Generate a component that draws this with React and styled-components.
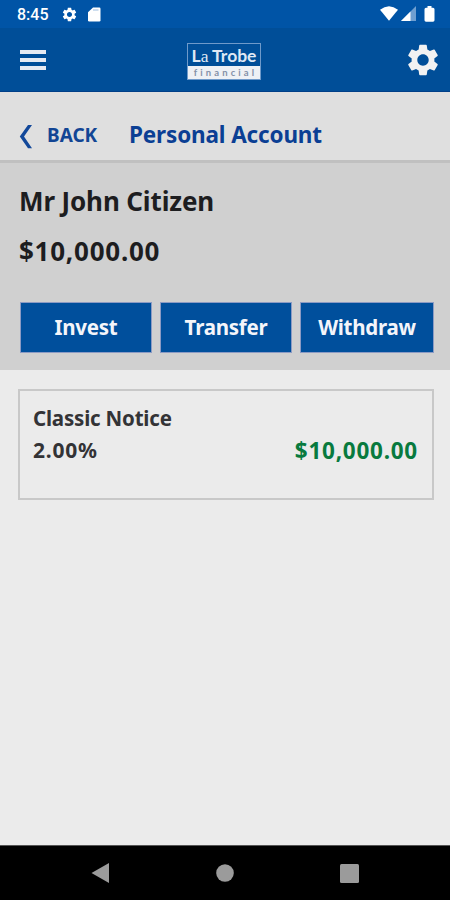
import styled, { createGlobalStyle } from 'styled-components';
import { MdSettings } from 'react-icons/md';

const GlobalStyles = createGlobalStyle`
    *, *::before, *::after {
        box-sizing: border-box;
    }
    body {
        margin: 0;
        background-color: #ebebeb;
        font-family: 'Noto Sans', 'Open Sans', sans-serif;
    }
`;

const ScreenStyles = styled.div`
    display: flex;
    flex-direction: column;
    width: 450px;
    height: 900px;
    overflow: hidden;
    background-color: #ebebeb;
    svg {
        display: block;
        flex-shrink: 0;
    }
`;

const Label = styled.span`
    font-size: ${({ $size }) => $size}px;
    letter-spacing: ${({ $spacing }) => $spacing || 0}px;
    font-weight: 700;
    color: ${({ $color }) => $color || '#1d1d1f'};
    line-height: 32px;
    white-space: nowrap;
`;

const StatusBarStyles = styled.div`
    display: flex;
    align-items: center;
    height: 28px;
    padding: 0 15px 0 17px;
    background-color: #0054a6;
    color: #fff;
    .time {
        width: 44px;
        padding-top: 2px;
        font-family: Roboto, sans-serif;
        font-size: 16px;
        font-weight: 500;
        line-height: 28px;
    }
    .card {
        margin-left: 10px;
    }
    .signals {
        display: flex;
        gap: 3px;
        margin-left: auto;
    }
`;

const HeaderStyles = styled.header`
    display: flex;
    align-items: center;
    justify-content: space-between;
    height: 64px;
    padding: 0 8px 0 20px;
    background-color: #004e98;
    border-bottom: 1px solid #003f88;
    color: #f2f2f2;
`;

const MenuIcon = styled.div`
    display: flex;
    flex-direction: column;
    gap: 4px;
    width: 26px;
    span {
        height: 4px;
        background-color: #e6eaf2;
    }
`;

const LogoStyles = styled.div`
    width: 74px;
    height: 37px;
    margin: 3px 0 0 -2px;
    border: 1px solid #6f9aca;
    text-align: center;
    .name {
        height: 22px;
        color: #dfe8f4;
        font-family: Lato, sans-serif;
        font-size: 17.5px;
        font-weight: 700;
        line-height: 24px;
        white-space: nowrap;
    }
    .thin {
        font-family: 'Liberation Serif', serif;
        font-weight: 400;
    }
    .tagline {
        height: 13px;
        padding-left: 3px;
        background-color: #eef1f5;
        color: #8492a8;
        font-family: Lato, sans-serif;
        font-size: 9.5px;
        font-weight: 700;
        letter-spacing: 3.1px;
        line-height: 13px;
        white-space: nowrap;
    }
`;

const TitleBarStyles = styled.div`
    display: flex;
    height: 71px;
    padding: 27px 0 0 19px;
    background-color: #dfdfdf;
    border-bottom: 3px solid #c0c0c0;
    .chevron {
        margin-top: 6px;
    }
    .back {
        width: 82px;
        margin-left: 14px;
    }
`;

const SummaryStyles = styled.section`
    display: flex;
    flex-direction: column;
    height: 207px;
    padding: 22px 16px 0 19px;
    background-color: #d0d0d0;
    .amount {
        margin-top: 18px;
    }
`;

const ActionsStyles = styled.div`
    display: grid;
    grid-template-columns: 132px 132px 134px;
    gap: 8px;
    margin: 35px 0 0 1px;
`;

const ActionButton = styled.button`
    height: 51px;
    padding: 0 0 2px;
    background-color: #004f9c;
    border: 1px solid #8c9bc4;
    border-radius: 0;
    font-family: inherit;
`;

const NoticeStyles = styled.section`
    display: flex;
    justify-content: space-between;
    height: 111px;
    margin: 19px 16px 0 18px;
    padding: 11px 14px 0 13px;
    border: 2px solid #c8c8c8;
    .details {
        display: flex;
        flex-direction: column;
    }
    .balance {
        margin-top: 33px;
    }
`;

const NavigationStyles = styled.nav`
    display: flex;
    align-items: center;
    justify-content: space-between;
    height: 55px;
    margin-top: auto;
    padding: 0 91px;
    background-color: #000;
    border-top: 1px solid #555;
`;

const actions = ['Invest', 'Transfer', 'Withdraw'];

function StatusBar() {
    return (
        <StatusBarStyles>
            <span className="time">8:45</span>
            <MdSettings size={17} />
            <svg className="card" width="13" height="15" viewBox="0 0 13 15">
                <path
                    d="M5 0.5H11.3Q12.5 0.5 12.5 1.7V13.3Q12.5 14.5 11.3 14.5H1.2Q0 14.5 0 13.3V5.2Z"
                    fill="#fff"
                />
                <path d="M5 3H10.5" stroke="#9dbde0" />
            </svg>
            <div className="signals">
                <svg width="18" height="15" viewBox="0 0 18 15">
                    <path d="M0 3.8Q9-3.2 18 3.8L9 14.8Z" fill="#fff" />
                </svg>
                <svg width="15" height="15" viewBox="0 0 15 15">
                    <path d="M15 0V15H0Z" fill="#6f9fd0" />
                    <path d="M9.5 5.5V15H0Z" fill="#fff" />
                </svg>
                <svg width="16" height="16" viewBox="0 0 16 16">
                    <path
                        d="M8.5 0H12.5V1.8H14Q15.5 1.8 15.5 3.3V14.3Q15.5 15.7 14 15.7H7Q5.5 15.7 5.5 14.3V3.3Q5.5 1.8 7 1.8H8.5Z"
                        fill="#fff"
                    />
                </svg>
            </div>
        </StatusBarStyles>
    );
}

function Logo() {
    return (
        <LogoStyles>
            <div className="name">
                L<span className="thin">a</span> Trobe
            </div>
            <div className="tagline">financial</div>
        </LogoStyles>
    );
}

export default function App() {
    return (
        <ScreenStyles>
            <GlobalStyles />
            <StatusBar />
            <HeaderStyles>
                <MenuIcon>
                    <span />
                    <span />
                    <span />
                </MenuIcon>
                <Logo />
                <MdSettings size={38} />
            </HeaderStyles>

            <TitleBarStyles>
                <svg className="chevron" width="14" height="24" viewBox="0 0 14 24">
                    <path
                        d="M9 0H13L5 11.5L13 23.2H9L0.8 11.5Z"
                        fill="#12489a"
                    />
                </svg>
                <div className="back">
                    <Label $size={19} $color="#124594">
                        BACK
                    </Label>
                </div>
                <Label $size={22.5} $spacing={-0.15} $color="#0b3f94">
                    Personal Account
                </Label>
            </TitleBarStyles>

            <SummaryStyles>
                <Label $size={26} $spacing={-0.13}>
                    Mr John Citizen
                </Label>
                <Label $size={26} $spacing={0.75} className="amount">
                    $10,000.00
                </Label>
                <ActionsStyles>
                    {actions.map((name) => (
                        <ActionButton key={name}>
                            <Label $size={20.5} $spacing={-0.25} $color="#f4f5fa">
                                {name}
                            </Label>
                        </ActionButton>
                    ))}
                </ActionsStyles>
            </SummaryStyles>

            <NoticeStyles>
                <div className="details">
                    <Label $size={20.5} $spacing={-0.2} $color="#333336">
                        Classic Notice
                    </Label>
                    <Label $size={21} $spacing={0.75} $color="#333336">
                        2.00%
                    </Label>
                </div>
                <Label
                    $size={22.5}
                    $spacing={0.75}
                    $color="#087a3e"
                    className="balance"
                >
                    $10,000.00
                </Label>
            </NoticeStyles>

            <NavigationStyles>
                <svg width="18" height="20" viewBox="0 0 18 20">
                    <path d="M18 0V20L0.5 10Z" fill="#9b9b9b" />
                </svg>
                <svg width="18" height="18" viewBox="0 0 18 18">
                    <circle cx="9" cy="9" r="8.8" fill="#9b9b9b" />
                </svg>
                <svg width="19" height="19" viewBox="0 0 19 19">
                    <rect width="19" height="19" rx="1.5" fill="#9b9b9b" />
                </svg>
            </NavigationStyles>
        </ScreenStyles>
    );
}
